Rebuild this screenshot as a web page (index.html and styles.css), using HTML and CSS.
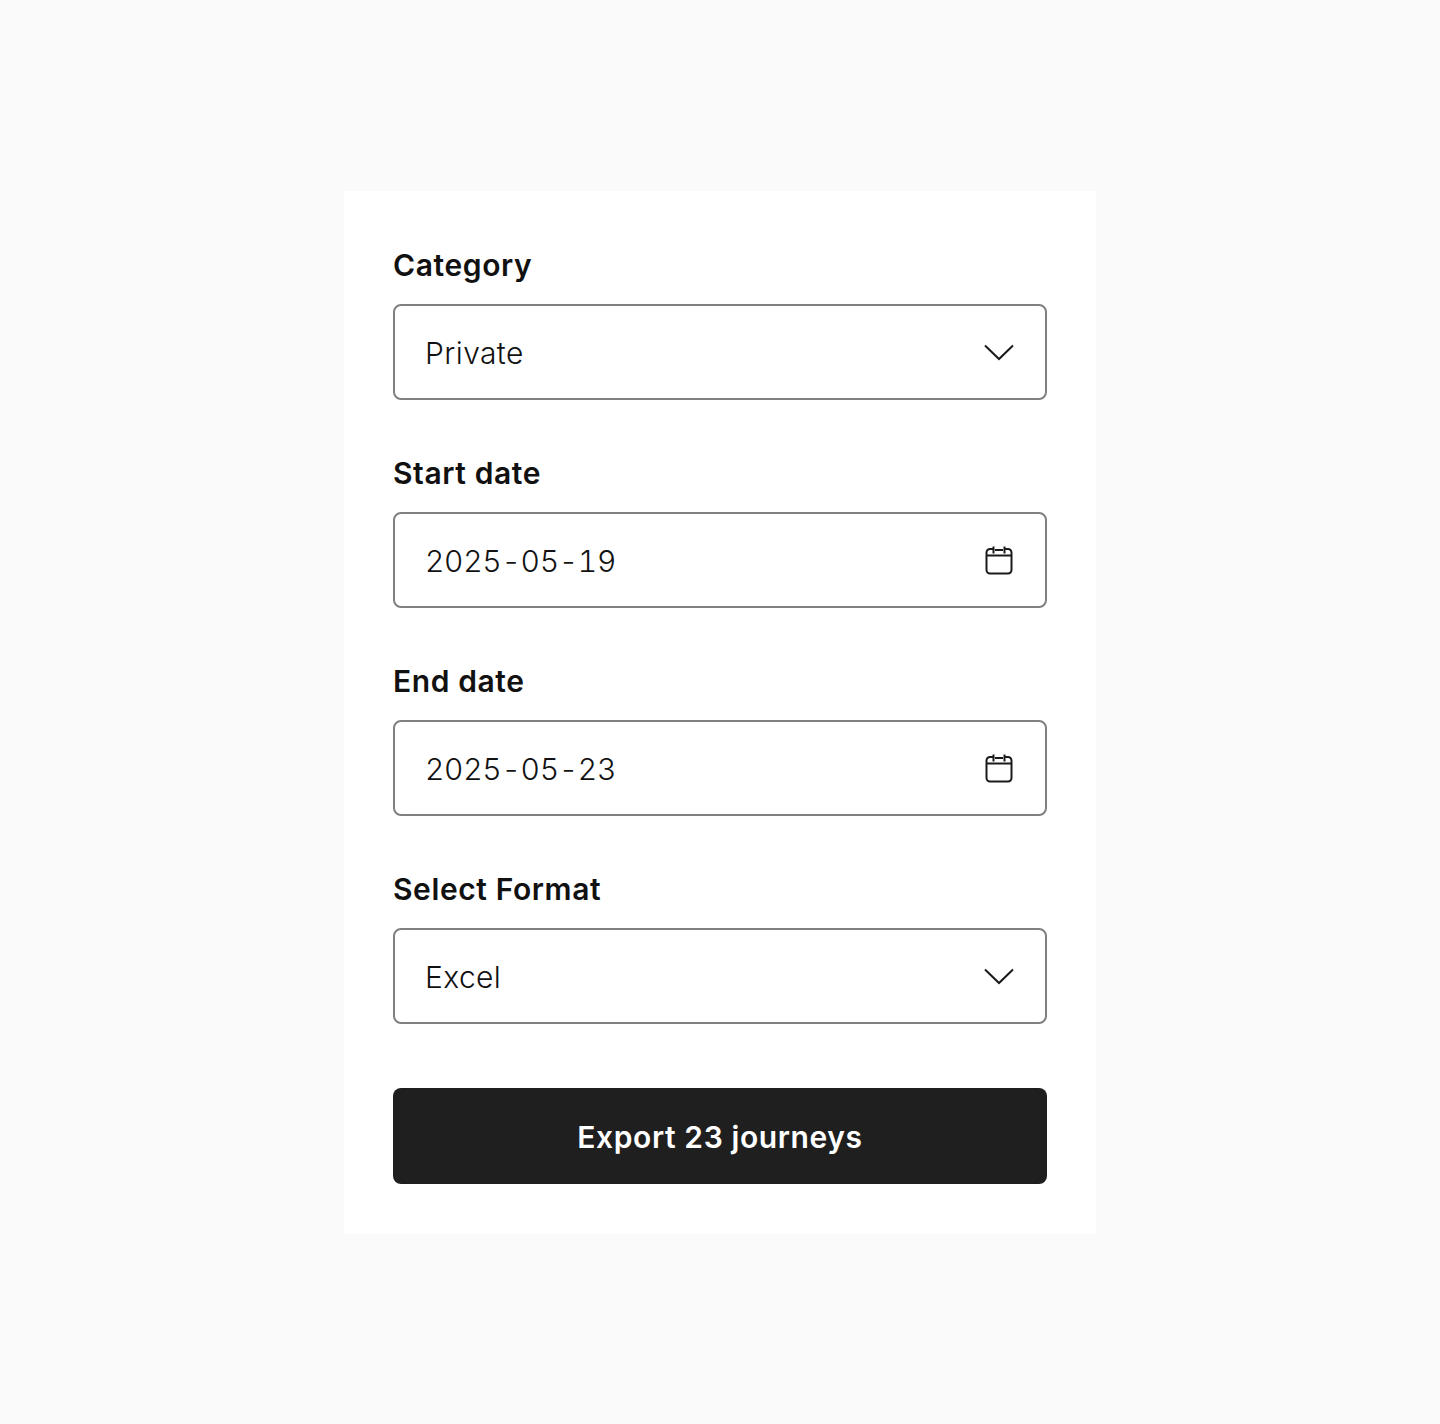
FILE: index.html

```html
<!DOCTYPE html>
<html lang="en">
<head>
    <meta charset="UTF-8">
    <meta name="viewport" content="width=device-width, initial-scale=1.0">
    <title>Export journeys</title>
    <link rel="stylesheet" href="styles.css">
</head>
<body>
    <div class="container">
        <form class="export-form">
            <div class="field">
                <div class="field-label">Category</div>
                <div class="field-box">
                    <span class="field-value">Private</span>
                    <svg class="icon" viewBox="0 0 32 32" fill="none" stroke="#1a1a1a" stroke-width="2"><path d="M2 9.500 16 23 30 9.500"/></svg>
                </div>
            </div>
            <div class="field">
                <div class="field-label">Start date</div>
                <div class="field-box">
                    <span class="field-value date">2025-05-19</span>
                    <svg class="icon" viewBox="0 0 32 32" fill="none" stroke="#1a1a1a" stroke-width="2"><path d="M10 5H7A3.500 3.500 0 0 0 3.500 8.500V26A3.500 3.500 0 0 0 7 29.500h18a3.500 3.500 0 0 0 3.500-3.500V8.500A3.500 3.500 0 0 0 25 5H22M12 6h8M3.500 11.500h25M10.500 2.500v7M21.500 2.500v7"/></svg>
                </div>
            </div>
            <div class="field">
                <div class="field-label">End date</div>
                <div class="field-box">
                    <span class="field-value date">2025-05-23</span>
                    <svg class="icon" viewBox="0 0 32 32" fill="none" stroke="#1a1a1a" stroke-width="2"><path d="M10 5H7A3.500 3.500 0 0 0 3.500 8.500V26A3.500 3.500 0 0 0 7 29.500h18a3.500 3.500 0 0 0 3.500-3.500V8.500A3.500 3.500 0 0 0 25 5H22M12 6h8M3.500 11.500h25M10.500 2.500v7M21.500 2.500v7"/></svg>
                </div>
            </div>
            <div class="field">
                <div class="field-label">Select Format</div>
                <div class="field-box">
                    <span class="field-value">Excel</span>
                    <svg class="icon" viewBox="0 0 32 32" fill="none" stroke="#1a1a1a" stroke-width="2"><path d="M2 9.500 16 23 30 9.500"/></svg>
                </div>
            </div>
            <button type="button" class="export-button">Export 23 journeys</button>
        </form>
    </div>
</body>
</html>
```

FILE: styles.css

```css
body {
    margin: 0;
    background-color: #fafafa;
    font-family: Inter, "Open Sans", sans-serif;
    color: #111;
}
.container {
    background-color: white;
    width: 654px;
    margin: 191px auto 0;
    padding: 49px 49px 50px;
}
.field {
    margin-bottom: 48px;
}
.field-label {
    box-sizing: border-box;
    height: 48px;
    margin-bottom: 16px;
    padding-top: 1px;
    font-size: 30px;
    font-weight: 600;
    letter-spacing: 0.6px;
    line-height: 48px;
}
.field-box {
    box-sizing: border-box;
    height: 96px;
    padding: 0 31px 0 30px;
    display: flex;
    justify-content: space-between;
    align-items: center;
    border: 2px solid #808080;
    border-radius: 8px;
}
.field-value {
    padding-top: 2px;
    font-size: 30px;
    font-weight: 350;
    letter-spacing: 0.4px;
    line-height: 48px;
}
.date {
    font-variant-numeric: tabular-nums;
    letter-spacing: -0.3px;
}
.icon {
    width: 32px;
    height: 32px;
    margin-right: -1px;
}
.export-button {
    display: block;
    width: 100%;
    height: 96px;
    margin-top: 64px;
    padding-top: 2px;
    border: none;
    border-radius: 8px;
    background-color: #1f1f1f;
    color: white;
    font-family: inherit;
    font-size: 30px;
    font-weight: 600;
    letter-spacing: 0.6px;
}
```
